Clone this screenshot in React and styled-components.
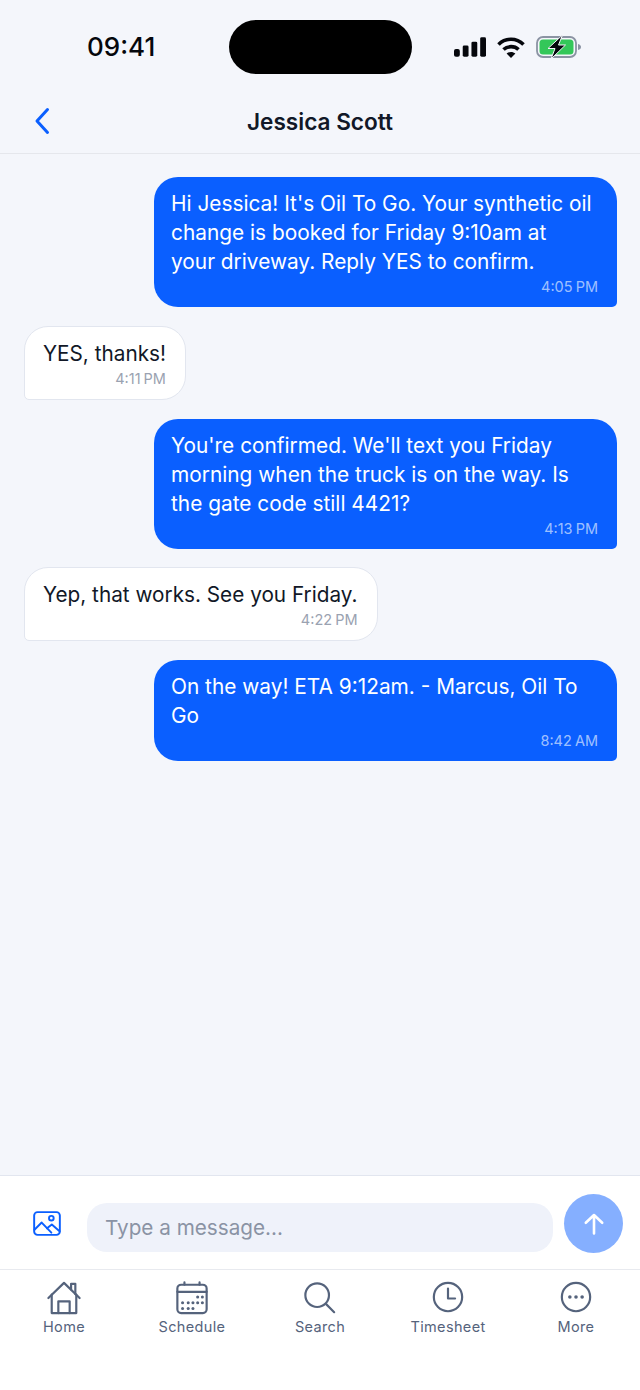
import React from "react";
import styled, { createGlobalStyle } from "styled-components";

const GlobalStyle = createGlobalStyle`
    html, body {
        margin: 0;
        padding: 0;
        background-color: #f4f6fb;
        font-family: Inter, "Liberation Sans", sans-serif;
    }
`;

const Page = styled.div`
    width: 640px;
    height: 1390px;
    display: flex;
    flex-direction: column;
    background-color: #f4f6fb;
    overflow: hidden;
`;

const StatusBar = styled.div`
    height: 91px;
    flex: none;
    display: flex;
    padding-top: 20px;
    box-sizing: border-box;
`;

const Clock = styled.div`
    width: 229px;
    padding-left: 87px;
    box-sizing: border-box;
    font-size: 26px;
    line-height: 54px;
    font-weight: 500;
    color: #05070c;
`;

const Island = styled.div`
    width: 183px;
    height: 54px;
    border-radius: 27px;
    background-color: #000;
`;

const StatusIcons = styled.div`
    height: 54px;
    margin-left: 42px;
    display: flex;
    align-items: center;
    gap: 11px;
    svg { display: block; }
`;

const NavBar = styled.div`
    height: 62px;
    flex: none;
    display: flex;
    align-items: center;
    position: relative;
    justify-content: center;
    border-bottom: 1px solid #e5e7ec;
`;

const BackIcon = styled.svg`
    position: absolute;
    left: 31px;
    top: 15px;
`;

const Title = styled.div`
    font-size: 22.6px;
    line-height: 60px;
    height: 60px;
    font-weight: 600;
    color: #111827;
`;

const Messages = styled.div`
    flex: 1;
    display: flex;
    flex-direction: column;
    align-items: flex-start;
    gap: 18.75px;
    padding: 23px 23px 0 24px;
`;

const Bubble = styled.div`
    box-sizing: border-box;
    align-self: ${props => props.$mine ? "flex-end" : "flex-start"};
    width: ${props => props.$mine ? "463px" : "auto"};
    padding: ${props => props.$mine ? "12px 19px 9px 17px" : "12px 19px 9px 18px"};
    background-color: ${props => props.$mine ? "#0a5fff" : "#ffffff"};
    color: ${props => props.$mine ? "#ffffff" : "#111827"};
    border: ${props => props.$mine ? "none" : "1px solid #e2e6ef"};
    border-radius: ${props => props.$mine ? "24px 24px 5px 24px" : "24px 24px 24px 5px"};
`;

const BubbleText = styled.div`
    font-size: ${props => props.$mine ? "20.85px" : "20.75px"};
    line-height: 29px;
`;

const BubbleTime = styled.div`
    text-align: right;
    font-size: 14.5px;
    line-height: 22px;
    word-spacing: -1px;
    color: ${props => props.$mine ? "rgba(255,255,255,0.62)" : "#9aa2b1"};
`;

const Composer = styled.div`
    height: 95px;
    flex: none;
    box-sizing: border-box;
    display: flex;
    align-items: flex-start;
    background-color: #ffffff;
    border-top: 1px solid #e2e6ef;
    border-bottom: 1px solid #e8eaef;
    padding: 18px 17px 0 33px;
`;

const ImageButton = styled.div`
    width: 54px;
    flex: none;
    padding-top: 17px;
    svg { display: block; }
`;

const MessageInput = styled.div`
    flex: 1;
    height: 49px;
    margin-top: 9px;
    padding-left: 18px;
    border-radius: 20px;
    background-color: #eff2fa;
    color: #8a93a4;
    font-size: 20.7px;
    line-height: 49px;
`;

const SendButton = styled.div`
    width: 59px;
    height: 59px;
    margin-left: 11px;
    flex: none;
    border-radius: 50%;
    background-color: #85afff;
    display: flex;
    align-items: center;
    justify-content: center;
`;

const TabBar = styled.div`
    flex: none;
    height: 120px;
    display: flex;
    background-color: #ffffff;
`;

const Tab = styled.div`
    width: 128px;
    display: flex;
    flex-direction: column;
    align-items: center;
    padding-top: 11px;
    color: #55637c;
    svg { display: block; }
`;

const TabLabel = styled.div`
    margin-top: 2px;
    font-size: 14.5px;
    line-height: 20px;
    font-weight: 400;
    letter-spacing: 0.35px;
`;

const conversation = [
    { mine: true, time: "4:05 PM", lines: ["Hi Jessica! It's Oil To Go. Your synthetic oil", "change is booked for Friday 9:10am at", "your driveway. Reply YES to confirm."] },
    { mine: false, time: "4:11 PM", lines: ["YES, thanks!"] },
    { mine: true, time: "4:13 PM", lines: ["You're confirmed. We'll text you Friday", "morning when the truck is on the way. Is", "the gate code still 4421?"] },
    { mine: false, time: "4:22 PM", lines: ["Yep, that works. See you Friday."] },
    { mine: true, time: "8:42 AM", lines: ["On the way! ETA 9:12am. - Marcus, Oil To", "Go"] },
];

const tabIcon = { width: 34, height: 34, viewBox: "0 0 36 36", fill: "none", stroke: "currentColor", strokeWidth: 2.3, strokeLinecap: "round", strokeLinejoin: "round" };

const HomeIcon = () => <svg {...tabIcon}>
    <path d="M1.5 18 L18 2 L34.5 18" />
    <path d="M5 14.5 V34 H31 V14.5" />
    <path d="M12 34 V21.5 H24 V34" />
    <path d="M25.5 9 V3 H30 V14" />
</svg>;

const ScheduleIcon = () => <svg {...tabIcon}>
    <rect x="2.5" y="4" width="31" height="30" rx="4" />
    <path d="M2.5 11.5 H33.5 M10 1.5 V4 M26 1.5 V4" />
    <g fill="currentColor" stroke="none">
        {[[25, 17], [30, 17], [9, 23], [15, 23], [20, 23], [25, 23], [30, 23], [9, 29], [15, 29], [20, 29]].map(([x, y]) =>
            <circle key={x + "-" + y} cx={x - 1} cy={y} r="1.6" />)}
    </g>
</svg>;

const SearchIcon = () => <svg {...tabIcon}>
    <circle cx="15" cy="15" r="12.5" />
    <path d="M24.5 24.5 L33 33" />
</svg>;

const ClockIcon = () => <svg {...tabIcon}>
    <circle cx="18" cy="17" r="15" />
    <path d="M18 8 V18.5 H25.5" />
</svg>;

const MoreIcon = () => <svg {...tabIcon}>
    <circle cx="18" cy="17" r="15" />
    <g fill="currentColor" stroke="none">
        <circle cx="11.5" cy="17" r="1.9" />
        <circle cx="18" cy="17" r="1.9" />
        <circle cx="24.5" cy="17" r="1.9" />
    </g>
</svg>;

const tabs = [
    { label: "Home", Icon: HomeIcon },
    { label: "Schedule", Icon: ScheduleIcon },
    { label: "Search", Icon: SearchIcon },
    { label: "Timesheet", Icon: ClockIcon },
    { label: "More", Icon: MoreIcon },
];

export default function App() {
    return <Page>
        <GlobalStyle />
        <StatusBar>
            <Clock>09:41</Clock>
            <Island />
            <StatusIcons>
                <svg width="32" height="20" viewBox="0 0 33 20" fill="#05070c">
                    <rect x="0" y="12" width="6" height="8" rx="2" />
                    <rect x="9" y="8.5" width="6" height="11.5" rx="1.5" />
                    <rect x="18" y="4.5" width="6" height="15.5" rx="1.5" />
                    <rect x="27" y="0" width="6" height="20" rx="1.5" />
                </svg>
                <svg width="28" height="21" viewBox="0 0 28 21" fill="none" stroke="#05070c" strokeWidth="3.6">
                    <path d="M1.5 7.5 C8.5 0.5 19.5 0.5 26.5 7.5" />
                    <path d="M6.5 12.5 C10.5 8.7 17.5 8.7 21.5 12.5" />
                    <path d="M14 21 L9.6 16.6 C12 14.4 16 14.4 18.4 16.6 Z" fill="#05070c" stroke="none" />
                </svg>
                <svg width="46" height="24" viewBox="0 0 46 24">
                    <rect x="1" y="2" width="39" height="20" rx="6" fill="none" stroke="#8b93a3" strokeWidth="1.8" />
                    <rect x="3.5" y="4.5" width="34" height="15" rx="3.5" fill="#34c759" />
                    <path d="M42 9 C44 9.5 45 10.5 45 12 C45 13.5 44 14.5 42 15 Z" fill="#8b93a3" />
                    <path d="M26.5 0 L12 13.5 H19 L15 24 L29.5 10 H22.5 Z" fill="#05070c" stroke="#f4f6fb" strokeWidth="1" />
                </svg>
            </StatusIcons>
        </StatusBar>
        <NavBar>
            <BackIcon width="24" height="30" viewBox="0 0 24 30" fill="none" stroke="#0a5fff" strokeWidth="3" strokeLinecap="round" strokeLinejoin="round">
                <path d="M16.5 3.5 L6 15 L16.5 26.5" />
            </BackIcon>
            <Title>Jessica Scott</Title>
        </NavBar>
        <Messages>
            {conversation.map((message) => <Bubble key={message.time} $mine={message.mine}>
                <BubbleText $mine={message.mine}>{message.lines.map((line) => <div key={line}>{line}</div>)}</BubbleText>
                <BubbleTime $mine={message.mine}>{message.time}</BubbleTime>
            </Bubble>)}
        </Messages>
        <Composer>
            <ImageButton>
                <svg width="28" height="25" viewBox="0 0 29 26" preserveAspectRatio="none" fill="none" stroke="#0a5fff" strokeWidth="2" strokeLinecap="round" strokeLinejoin="round">
                    <rect x="1.2" y="1.2" width="26.6" height="23.6" rx="3.5" />
                    <circle cx="19" cy="7.5" r="2.4" />
                    <path d="M1.5 19.5 L9 12 L19 22.5" />
                    <path d="M14.5 18 L19.5 14 L27.5 21" />
                </svg>
            </ImageButton>
            <MessageInput>Type a message...</MessageInput>
            <SendButton>
                <svg width="24" height="24" viewBox="0 0 24 24" fill="none" stroke="#ffffff" strokeWidth="2.6" strokeLinecap="round" strokeLinejoin="round">
                    <path d="M12 21.5 V3 M3.8 10.8 L12 3 L20.2 10.8" />
                </svg>
            </SendButton>
        </Composer>
        <TabBar>
            {tabs.map(({ label, Icon }) => <Tab key={label}>
                <Icon />
                <TabLabel>{label}</TabLabel>
            </Tab>)}
        </TabBar>
    </Page>;
}
